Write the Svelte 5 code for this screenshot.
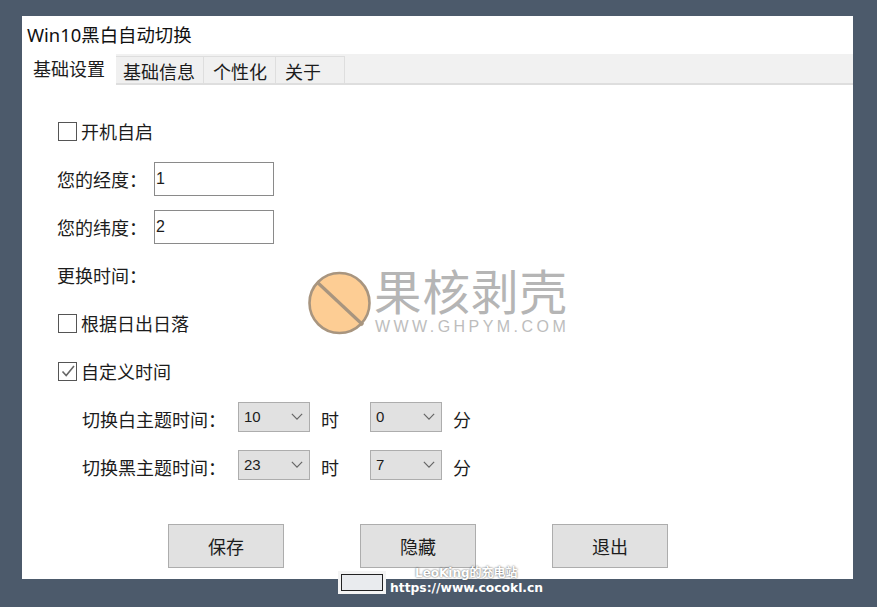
<script>
  const tabs = ['基础设置', '基础信息', '个性化', '关于'];
  const times = [
    { label: '切换白主题时间：', h: '10', m: '0' },
    { label: '切换黑主题时间：', h: '23', m: '7' }
  ];
</script>

<div class="desktop">
  <div class="window">
    <div class="title">Win10黑白自动切换</div>
    <div class="tabs">
      {#each tabs as t, i}
        <div class="tab" class:active={i === 0}>{t}</div>
      {/each}
    </div>
    <div class="body">
      <div class="row"><span class="check"></span>开机自启</div>
      <div class="row"><span class="lab">您的经度：</span><span class="input">1</span></div>
      <div class="row"><span class="lab">您的纬度：</span><span class="input">2</span></div>
      <div class="row">更换时间：</div>
      <div class="row"><span class="check"></span>根据日出日落</div>
      <div class="row">
        <span class="check">
          <svg width="16" height="16" viewBox="0 0 16 16"><path d="M2.5 8.5 6.2 12.5 14 3" fill="none" stroke="#666" stroke-width="1.6"/></svg>
        </span>自定义时间
      </div>
      <div class="times">
        {#each times as t}
          <div class="trow">
            <span class="tlab">{t.label}</span>
            <span class="select">{t.h}<svg width="12" height="7" viewBox="0 0 14 8"><path d="M1 1 7 7 13 1" fill="none" stroke="#666" stroke-width="1.4"/></svg></span>
            <span class="unit">时</span>
            <span class="select">{t.m}<svg width="12" height="7" viewBox="0 0 14 8"><path d="M1 1 7 7 13 1" fill="none" stroke="#666" stroke-width="1.4"/></svg></span>
            <span class="unit">分</span>
          </div>
        {/each}
      </div>
      <div class="buttons">
        <div class="btn">保存</div>
        <div class="btn">隐藏</div>
        <div class="btn">退出</div>
      </div>
    </div>
  </div>

  <div class="mark">
    <svg width="66" height="66" viewBox="0 0 66 66">
      <circle cx="33.5" cy="33" r="30" fill="#fdcd94" stroke="#a8957f" stroke-width="2.6"/>
      <path d="M11 12 57 55" stroke="#a8957f" stroke-width="3.2"/>
    </svg>
    <div class="marktext">
      <div class="cn">果核剥壳</div>
      <div class="en">WWW.GHPYM.COM</div>
    </div>
  </div>

  <div class="badge">
    <div class="box"></div>
    <div class="site">
      <div class="s1">LeoKing的充电站</div>
      <div class="s2">https://www.cocokl.cn</div>
    </div>
  </div>
</div>

<style>
  :global(body) { margin: 0; }
  .desktop {
    position: relative;
    width: 877px;
    height: 607px;
    box-sizing: border-box;
    padding: 16px 24px 28px 22px;
    background: #4c5a6b;
    overflow: hidden;
    font-family: "Noto Sans", "Noto Sans CJK SC", sans-serif;
    color: #1c1c1c;
    font-size: 18px;
  }
  .window { height: 563px; background: #fff; display: flex; flex-direction: column; }
  .title { height: 38px; line-height: 37px; padding-left: 5px; color: #111; font-size: 18.4px; }
  .tabs {
    height: 31px;
    box-sizing: border-box;
    display: flex;
    align-items: flex-end;
    background: #f1f1f1;
    border-bottom: 2px solid #dedede;
  }
  .tab {
    height: 27px;
    line-height: 30px;
    box-sizing: border-box;
    padding: 0 8px;
    border: 1px solid #dedede;
    border-bottom: none;
    border-left: none;
    background: #f0f0f0;
    white-space: nowrap;
  }
  .tab.active {
    height: 31px;
    width: 94px;
    margin-bottom: -2px;
    background: #fff;
    padding: 0 0 0 11px;
    line-height: 31px;
    border: none;
  }
  .tab:nth-child(2) { padding: 0 8px 0 7px; }
  .tab:nth-child(3) { padding: 0 8px 0 9px; }
  .tab:nth-child(4) { padding: 0 23px 0 9px; }
  .body { flex: 1; display: flex; flex-direction: column; padding: 22px 0 0 35px; }
  .row { height: 48px; display: flex; align-items: center; white-space: nowrap; }
  .lab { width: 97px; }
  .check {
    width: 19px;
    height: 19px;
    box-sizing: border-box;
    border: 1.5px solid #555;
    margin: 0 4px 0 1px;
    display: flex;
    align-items: center;
    justify-content: center;
  }
  .input {
    width: 120px;
    height: 34px;
    box-sizing: border-box;
    border: 1.5px solid #8a8a8a;
    padding-left: 1px;
    line-height: 32px;
    font-size: 16px;
    font-family: "Liberation Sans", sans-serif;
  }
  .times { padding: 0 0 0 25px; margin-top: -2px; }
  .trow { height: 48px; display: flex; align-items: center; }
  .tlab { width: 156px; white-space: nowrap; margin-top: 3px; }
  .select {
    width: 72px;
    height: 30px;
    box-sizing: border-box;
    background: #e1e1e1;
    border: 1px solid #adadad;
    font-size: 15px;
    font-family: "Liberation Sans", sans-serif;
    display: flex;
    align-items: center;
    justify-content: space-between;
    padding: 0 6px 2px 5px;
  }
  .unit { margin: 3px 0 0 11px; width: 49px; }
  .unit:last-child { width: auto; }
  .buttons { display: flex; gap: 76px; padding-left: 111px; margin-top: 35px; }
  .btn {
    width: 116px;
    height: 44px;
    box-sizing: border-box;
    background: #e1e1e1;
    border: 1px solid #adadad;
    display: flex;
    align-items: center;
    justify-content: center;
  }
  .mark {
    position: absolute;
    left: 306px;
    top: 270px;
    display: flex;
    gap: 2px;
  }
  .marktext { display: flex; flex-direction: column; }
  .cn { font-size: 47.5px; line-height: 50px; letter-spacing: 1px; white-space: nowrap; color: #b5b5b5; margin-top: -3px; }
  .en { font-size: 16px; line-height: 20px; letter-spacing: 3.45px; white-space: nowrap; margin-left: 1px; color: #bdbdbd; font-family: "Liberation Sans", sans-serif; }
  .badge { position: absolute; left: 341px; top: 566px; display: flex; }
  .box {
    width: 42px;
    height: 17px;
    box-sizing: border-box;
    margin-top: 8px;
    background: #e9ebee;
    border: 1px solid #222;
    outline: 3px solid #f4f4f4;
  }
  .site { margin-left: 7px; color: #fff; font-family: "DejaVu Sans", "Noto Sans CJK SC", sans-serif; font-weight: 700; }
  .s1 { font-size: 12px; line-height: 14px; margin-left: 25px; text-shadow: 0 0 2px #444; white-space: nowrap; }
  .s2 { font-size: 12.3px; line-height: 16px; white-space: nowrap; }
</style>
